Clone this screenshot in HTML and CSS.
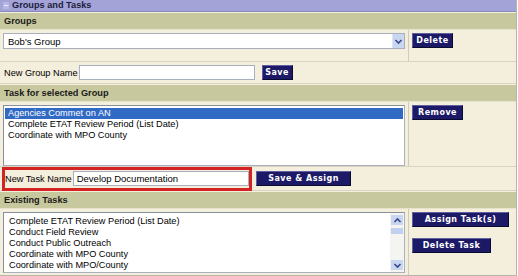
FILE: index.html
```html
<!DOCTYPE html>
<html>
<head>
<meta charset="utf-8">
<link rel="stylesheet" href="styles.css">
</head>
<body>
<div class="panel">
  <div class="title"><span class="toggle">−</span>Groups and Tasks</div>
  <div class="hdr">Groups</div>
  <div class="split s1">
    <div class="left">
      <div class="select"><span class="val">Bob's Group</span><span class="arrow"><svg width="9" height="9" viewBox="0 0 9 9"><path d="M1.5 3 L4.5 6 L7.5 3" fill="none" stroke="#3a4a8c" stroke-width="1.6"/></svg></span></div>
    </div>
    <div class="right"><button class="btn b-del">Delete</button></div>
  </div>
  <div class="row r1">
    <span class="lbl">New Group Name</span><input class="txt w1" type="text"><button class="btn b-save">Save</button>
  </div>
  <div class="hdr">Task for selected Group</div>
  <div class="split s2">
    <div class="left">
      <div class="listbox lb1">
        <div class="opt sel">Agencies Commet on AN</div>
        <div class="opt">Complete ETAT Review Period (List Date)</div>
        <div class="opt">Coordinate with MPO County</div>
      </div>
    </div>
    <div class="right"><button class="btn b-rem">Remove</button></div>
  </div>
  <div class="row r2">
    <div class="redbox"><span class="lbl">New Task Name</span><input class="txt w2" type="text" value="Develop Documentation"></div>
    <button class="btn wide">Save &amp; Assign</button>
  </div>
  <div class="hdr">Existing Tasks</div>
  <div class="split s3">
    <div class="left">
      <div class="listbox lb2">
        <div class="items">
          <div class="opt">Complete ETAT Review Period (List Date)</div>
          <div class="opt">Conduct Field Review</div>
          <div class="opt">Conduct Public Outreach</div>
          <div class="opt">Coordinate with MPO County</div>
          <div class="opt">Coordinate with MPO/County</div>
        </div>
        <div class="scrollbar">
          <span class="sbtn"><svg width="9" height="7" viewBox="0 0 9 7"><path d="M1.5 5 L4.5 2 L7.5 5" fill="none" stroke="#3a4a8c" stroke-width="1.6"/></svg></span>
          <span class="thumb"></span>
          <span class="track"></span>
          <span class="sbtn"><svg width="9" height="7" viewBox="0 0 9 7"><path d="M1.5 2 L4.5 5 L7.5 2" fill="none" stroke="#3a4a8c" stroke-width="1.6"/></svg></span>
        </div>
      </div>
    </div>
    <div class="right col">
      <button class="btn b-assign">Assign Task(s)</button>
      <button class="btn b-deltask">Delete Task</button>
    </div>
  </div>
</div>
</body>
</html>
```
FILE: styles.css
```css
* { box-sizing: border-box; }
body {
  margin: 0;
  background: #ffffff;
  font-family: "Liberation Sans", Arial, sans-serif;
  font-size: 9px;
  color: #000;
}
.panel {
  width: 517px;
  height: 276px;
  background: #f4eedc;
  border-right: 1px solid #b8b4a8;
  display: flex;
  flex-direction: column;
}
.title {
  height: 12px;
  background: #a3a3d8;
  border-bottom: 1px solid #8888c0;
  font-weight: bold;
  font-size: 9.2px;
  line-height: 11px;
  color: #1d1d3c;
  padding-left: 3px;
  display: flex;
  align-items: center;
}
.toggle {
  display: inline-block;
  width: 6px;
  height: 7px;
  margin-right: 3px;
  background: #b8b8e4;
  color: #f0f0ff;
  font-size: 8px;
  line-height: 7px;
  text-align: center;
}
.hdr {
  height: 17px;
  margin-top: 1px;
  background: #c8c89e;
  border-bottom: 1px solid #e8e4cc;
  font-weight: bold;
  font-size: 9.2px;
  line-height: 16px;
  padding-left: 4px;
  color: #1a1a1a;
  white-space: nowrap;
}
.split {
  display: flex;
  border-bottom: 1px solid #d9d3c0;
}
.left {
  width: 408px;
  padding: 3px 3px 2px 3px;
}
.right {
  flex: 1;
  border-left: 1px solid #d0cab6;
  padding: 3px 0 0 3px;
}
.s1 { height: 35px; }
.s2 { height: 65px; }
.s3 { flex: 1; border-bottom: 1px solid #b8b4a8; }
.col {
  display: flex;
  flex-direction: column;
  align-items: flex-start;
  gap: 11px;
}
.select {
  height: 16px;
  background: #fff;
  border: 1px solid #a8b0c0;
  display: flex;
  align-items: center;
  padding-left: 4px;
  font-size: 9.5px;
}
.val { flex: 1; }
.arrow {
  width: 12px;
  height: 14px;
  background: #c8d6f0;
  border-left: 1px solid #dde6f6;
  display: flex;
  align-items: center;
  justify-content: center;
}
.btn {
  background: #1c1a66;
  color: #fff;
  border: 1px solid #6060a0;
  border-right-color: #0a0a30;
  border-bottom-color: #0a0a30;
  font-family: "DejaVu Sans", Verdana, sans-serif;
  font-weight: bold;
  font-size: 8px;
  letter-spacing: 0.5px;
  height: 15px;
  padding: 0;
  line-height: 12px;
  margin: 0;
  white-space: nowrap;
  text-align: center;
}
.b-del { width: 41px; }
.b-save { width: 31px; }
.b-rem { width: 51px; }
.row {
  display: flex;
  align-items: center;
  border-bottom: 1px solid #d9d3c0;
}
.r1 { height: 24px; padding-left: 4px; }
.r2 { height: 24px; padding-left: 2px; }
.lbl { font-size: 9.2px; margin-right: 1px; white-space: nowrap; }
.txt {
  height: 15px;
  border: 1px solid #a8b0c0;
  background: #fff;
  font-family: "Liberation Sans", Arial, sans-serif;
  font-size: 9.5px;
  padding: 0 3px;
  margin: 0;
  color: #000;
}
.w1 { width: 176px; margin-right: 7px; }
.w2 { width: 176px; }
.redbox {
  display: flex;
  align-items: center;
  width: 250px;
  height: 24px;
  border: 3px solid #d42323;
  padding-left: 0;
}
.wide { margin-left: 4px; width: 95px; }
.listbox {
  background: #fff;
  border: 1px solid #a8b0c0;
  border-top-color: #8890a0;
  border-left-color: #8890a0;
}
.lb1 { height: 61px; padding: 2px 1px; }
.lb2 {
  height: 61px;
  display: flex;
}
.items { flex: 1; padding: 3px 2px; }
.opt {
  height: 11px;
  line-height: 11px;
  font-size: 9.2px;
  padding-left: 3px;
  white-space: nowrap;
}
.sel { background: #316ac5; color: #fff; }
.scrollbar {
  width: 14px;
  display: flex;
  flex-direction: column;
  background: #f4f4f0;
  padding: 2px 1px;
}
.sbtn {
  height: 10px;
  background: #c8d6f0;
  display: flex;
  align-items: center;
  justify-content: center;
}
.thumb {
  height: 6px;
  margin-top: 3px;
  background: #c0d0ee;
}
.track { flex: 1; }
.b-assign { width: 97px; }
.b-deltask { width: 79px; }
```
